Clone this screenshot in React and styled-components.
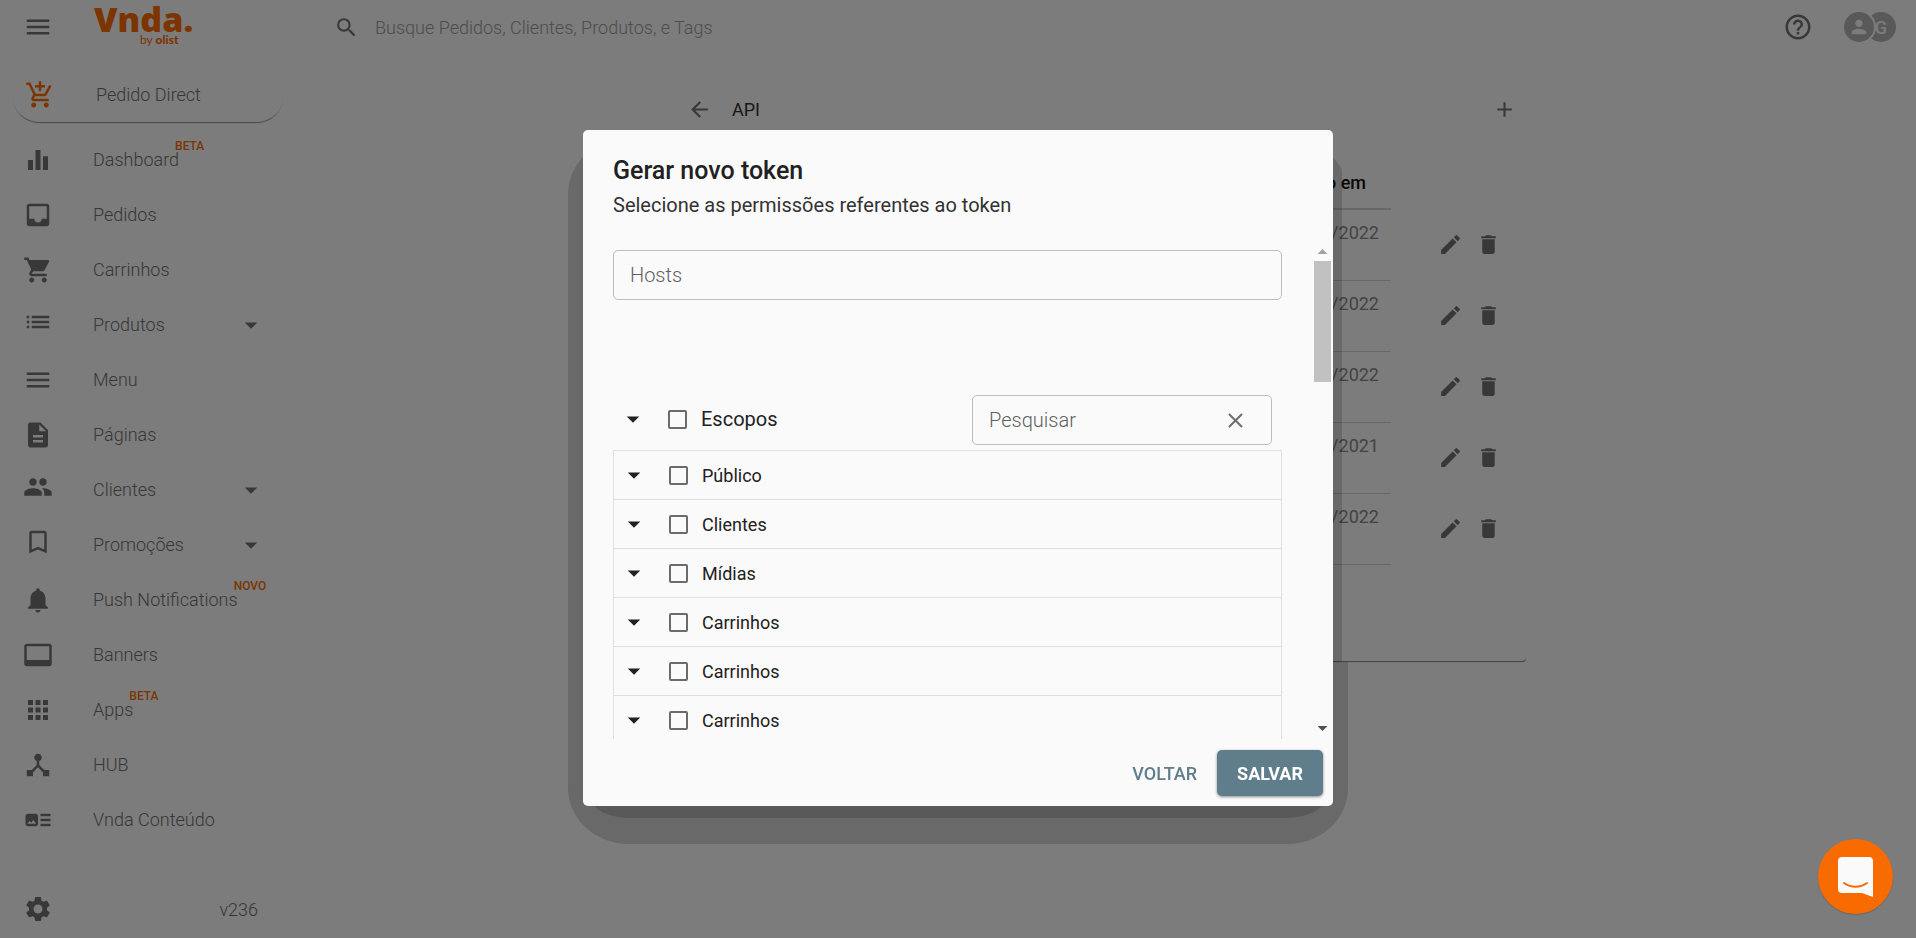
import React, { useState } from "react";
import styled, { createGlobalStyle } from "styled-components";
import {
	MdAdd,
	MdAddShoppingCart,
	MdApps,
	MdArrowBack,
	MdArrowDropDown,
	MdArtTrack,
	MdBookmarkBorder,
	MdClose,
	MdDelete,
	MdDescription,
	MdDeviceHub,
	MdEdit,
	MdEqualizer,
	MdHelpOutline,
	MdInbox,
	MdList,
	MdMenu,
	MdNotifications,
	MdPeople,
	MdPerson,
	MdSearch,
	MdSettings,
	MdShoppingCart,
	MdVideoLabel
} from "react-icons/md";

const GlobalStyle = createGlobalStyle`
	* {
		box-sizing: border-box;
	}

	body {
		margin: 0;
		background: #f8f8f8;
		color: #6f6f6f;
		font-family: Roboto, "Liberation Sans", sans-serif;
		font-size: 18px;
		font-weight: 300;
	}

	button, input {
		font-family: inherit;
	}

	a {
		color: inherit;
		text-decoration: none;
	}
`;

const Page = styled.div`
	display: flex;
	flex-direction: column;
	min-height: 100vh;
`;

const TopBar = styled.header`
	display: flex;
	align-items: center;
	height: 54px;
	padding: 0 20px 0 23px;
`;

const IconButton = styled.button`
	display: flex;
	align-items: center;
	justify-content: center;
	padding: 0;
	border: none;
	background: none;
	color: ${props => props.$color || "#707070"};
	font-size: ${props => props.$size || 25}px;
	cursor: pointer;
`;

const Logo = styled.a`
	display: flex;
	flex-direction: column;
	width: 240px;
	margin-left: 41px;
	color: #f86b00;

	strong {
		font-family: "Open Sans", sans-serif;
		font-size: 34px;
		font-weight: 800;
		line-height: 26px;
	}

	span {
		padding-left: 46px;
		font-family: Lato, sans-serif;
		font-size: 12px;
		font-weight: 400;
		line-height: 16px;
	}

	b {
		font-weight: 900;
	}
`;

const Search = styled.label`
	display: flex;
	flex: 1;
	align-items: center;
	gap: 16px;
	color: #707070;
	font-size: 25px;

	input {
		flex: 1;
		padding: 0;
		border: none;
		outline: none;
		background: none;
		font-size: 18px;
		font-weight: 300;
	}

	input::placeholder {
		color: #9a9a9a;
	}
`;

const Avatars = styled.div`
	display: flex;
	align-items: center;
	margin-left: 29px;
`;

const Avatar = styled.span`
	display: flex;
	align-items: center;
	justify-content: center;
	width: ${props => (props.$front ? 34 : 30)}px;
	height: ${props => (props.$front ? 34 : 30)}px;
	margin-left: ${props => (props.$front ? 0 : -10)}px;
	border: ${props => (props.$front ? "2px solid #f8f8f8" : "none")};
	border-radius: 50%;
	background: #b2b2b2;
	color: #f8f8f8;
	font-size: ${props => (props.$front ? 22 : 18)}px;
	font-weight: 500;
	position: relative;
	z-index: ${props => (props.$front ? 1 : 0)};
`;

const Body = styled.div`
	display: flex;
	flex: 1;
`;

const Sidebar = styled.nav`
	display: flex;
	flex-direction: column;
	width: 283px;
	padding-top: 13px;
`;

const DirectLink = styled.a`
	display: flex;
	align-items: center;
	gap: 41px;
	height: 55px;
	margin: 0 -1px 10px 12px;
	padding-left: 13px;
	border-radius: 28px;
	box-shadow: 0 2px 1px -1px #909090;

	svg {
		color: #f86b00;
		font-size: 30px;
	}
`;

const NavItem = styled.a`
	display: flex;
	align-items: center;
	height: 55px;
	padding: 0 17px 0 23px;

	svg {
		color: #707070;
		font-size: 30px;
	}

	svg:first-child {
		margin-bottom: ${props => (props.$expandable ? 5 : 0)}px;
	}
`;

const NavLabel = styled.span`
	position: relative;
	margin: 0 auto 0 40px;
`;

const Badge = styled.sup`
	position: absolute;
	top: -10px;
	left: calc(100% - 4px);
	color: #f86b00;
	font-size: 12px;
	font-weight: 500;
	line-height: 14px;
`;

const SidebarFooter = styled.div`
	display: flex;
	align-items: center;
	justify-content: space-between;
	height: 58px;
	margin-top: auto;
	padding: 0 25px 0 23px;
`;

const Main = styled.main`
	flex: 1;
	padding-top: 30px;
`;

const Container = styled.div`
	max-width: 855px;
	margin: 0 auto;
`;

const ContentHeader = styled.div`
	display: flex;
	align-items: center;
	gap: 20px;
	height: 50px;
	padding: 0 10px 0 15px;

	h1 {
		flex: 1;
		margin: 0;
		color: #303030;
		font-size: 18px;
		font-weight: 400;
	}
`;

const Card = styled.section`
	display: flex;
	align-items: flex-start;
	padding: 20px 26px 96px 28px;
	border-radius: 5px;
	box-shadow: 0 2px 1px -1px #808080;
`;

const TokenTable = styled.table`
	flex: 1;
	border-collapse: collapse;

	th {
		height: 55px;
		padding: 2px 25px 0 0;
		border-bottom: 2px solid #d0d0d0;
		color: #101010;
		font-size: 18px;
		font-weight: 500;
		text-align: right;
	}

	td {
		height: 71px;
		padding: 12px 12px 0 0;
		border-bottom: 1px solid #d0d0d0;
		color: #868686;
		font-weight: 400;
		text-align: right;
		vertical-align: top;
	}
`;

const RowActions = styled.div`
	display: flex;
	flex-direction: column;
	padding: 55px 0 0 47px;
`;

const ActionPair = styled.div`
	display: flex;
	align-items: center;
	gap: 13px;
	height: 71px;
`;

const Backdrop = styled.div`
	position: fixed;
	inset: 0;
	z-index: 2;
	display: flex;
	align-items: center;
	justify-content: center;
	padding-bottom: 2px;
	background: rgba(0, 0, 0, 0.5);
`;

const DialogShade = styled.div`
	position: relative;
	display: flex;
	width: 750px;
	max-width: 90vw;
	height: calc(100vh - 262px);

	&::before {
		content: "";
		position: absolute;
		inset: 8px -15px -38px;
		border-radius: 60px / 56px;
		background: rgba(0, 0, 0, 0.15);
		clip-path: polygon(
			0 0,
			calc(100% - 6px) 0,
			calc(100% - 6px) calc(100% - 182px),
			100% calc(100% - 182px),
			100% 100%,
			0 100%
		);
	}

	&::after {
		content: "";
		position: absolute;
		inset: auto 8px -12px;
		height: 40px;
		border-radius: 0 0 40px 40px / 0 0 20px 20px;
		background: rgba(0, 0, 0, 0.16);
	}
`;

const Dialog = styled.form`
	position: relative;
	z-index: 1;
	display: flex;
	flex: 1;
	flex-direction: column;
	border-radius: 5px;
	background: #fafafa;
	color: #212121;
`;

const DialogHeader = styled.div`
	padding: 25px 30px 22px;

	h2 {
		margin: 0;
		font-size: 25px;
		font-weight: 500;
		line-height: 32px;
	}

	p {
		margin: 0;
		color: #333;
		font-size: 20px;
		font-weight: 400;
		line-height: 36px;
	}
`;

const DialogBody = styled.div`
	display: flex;
	flex: 1;
	min-height: 0;
	padding-right: 2px;
`;

const DialogContent = styled.div`
	flex: 1;
	overflow-y: auto;
	scrollbar-width: none;
	padding: 0 32px 0 30px;
`;

const Scrollbar = styled.div`
	display: flex;
	flex-direction: column;
	align-items: center;
	width: 17px;
`;

const ScrollArrow = styled.span`
	width: 10px;
	height: 5px;
	margin: ${props => (props.$down ? "auto 0 8px" : "4px 0 7px")};
	background: ${props => (props.$down ? "#505050" : "#a3a3a3")};
	clip-path: ${props =>
		props.$down
			? "polygon(0 0, 100% 0, 50% 100%)"
			: "polygon(50% 0, 100% 100%, 0 100%)"};
`;

const ScrollThumb = styled.span`
	width: 17px;
	height: 121px;
	background: #c1c1c1;
`;

const Field = styled.div`
	display: flex;
	align-items: center;
	height: 50px;
	padding: 0 ${props => (props.$search ? 23 : 16)}px 0 16px;
	margin: ${props => (props.$search ? "2px 10px 0 auto" : "5px 0 0")};
	width: ${props => (props.$search ? "300px" : "100%")};
	border: 1px solid #bdbdbd;
	border-radius: 5px;

	input {
		flex: 1;
		min-width: 0;
		padding: 0;
		border: none;
		outline: none;
		background: none;
		font-size: 20px;
		font-weight: 300;
	}

	input::placeholder {
		color: #606060;
	}
`;

const ScopeHeader = styled.div`
	display: flex;
	align-items: center;
	height: 62px;
	margin-top: 88px;
	padding-left: 5px;
	font-size: 20px;
	font-weight: 400;
`;

const ScopeList = styled.ul`
	margin: 0;
	padding: 0;
	border: 1px solid #e0e0e0;
	list-style: none;
`;

const ScopeRow = styled.li`
	display: flex;
	align-items: center;
	height: 49px;
	padding-left: 5px;
	border-bottom: 1px solid #e0e0e0;
	font-weight: 400;
`;

const CheckLabel = styled.label`
	display: flex;
	align-items: center;
	gap: 14px;
	margin-left: 20px;
`;

const Checkbox = styled.input`
	appearance: none;
	width: 19px;
	height: 19px;
	margin: 0;
	border: 2px solid #6b6b6b;
	border-radius: 2px;

	&:checked {
		background: #607d8b;
	}
`;

const DialogFooter = styled.div`
	display: flex;
	justify-content: flex-end;
	padding: 11px 10px 10px;
`;

const FooterButton = styled.button`
	height: 46px;
	padding: 0 20px;
	border: none;
	border-radius: 5px;
	background: ${props => (props.$primary ? "#607d8b" : "none")};
	box-shadow: ${props =>
		props.$primary ? "0 1px 3px rgba(0, 0, 0, 0.45)" : "none"};
	color: ${props => (props.$primary ? "#fff" : "#607d8b")};
	font-size: 18px;
	font-weight: ${props => (props.$primary ? 700 : 500)};
	cursor: pointer;
`;

const Launcher = styled.button`
	position: fixed;
	right: 23px;
	bottom: 24px;
	z-index: 3;
	width: 75px;
	height: 75px;
	padding: 0;
	border: none;
	border-radius: 50%;
	background: #f86b00;
	box-shadow: 0 1px 1px #686868;
	cursor: pointer;

	svg {
		display: block;
	}
`;

const navItems = [
	{ label: "Dashboard", icon: MdEqualizer, badge: "BETA" },
	{ label: "Pedidos", icon: MdInbox },
	{ label: "Carrinhos", icon: MdShoppingCart },
	{ label: "Produtos", icon: MdList, expandable: true },
	{ label: "Menu", icon: MdMenu },
	{ label: "Páginas", icon: MdDescription },
	{ label: "Clientes", icon: MdPeople, expandable: true },
	{ label: "Promoções", icon: MdBookmarkBorder, expandable: true },
	{ label: "Push Notifications", icon: MdNotifications, badge: "NOVO" },
	{ label: "Banners", icon: MdVideoLabel },
	{ label: "Apps", icon: MdApps, badge: "BETA" },
	{ label: "HUB", icon: MdDeviceHub },
	{ label: "Vnda Conteúdo", icon: MdArtTrack }
];

const tokens = [
	{ id: 1, date: "10/05/2022" },
	{ id: 2, date: "10/05/2022" },
	{ id: 3, date: "10/05/2022" },
	{ id: 4, date: "10/05/2021" },
	{ id: 5, date: "10/05/2022" }
];

const scopes = [
	"Público",
	"Clientes",
	"Mídias",
	"Carrinhos",
	"Carrinhos",
	"Carrinhos"
];

const TokenDialog = () => {
	const [query, setQuery] = useState("");

	return (
		<DialogShade>
			<Dialog
				role="dialog"
				aria-labelledby="dialog-title"
				onSubmit={e => e.preventDefault()}
			>
				<DialogHeader>
					<h2 id="dialog-title">Gerar novo token</h2>
					<p>Selecione as permissões referentes ao token</p>
				</DialogHeader>

				<DialogBody>
					<DialogContent>
						<Field>
							<input type="text" placeholder="Hosts" aria-label="Hosts" />
						</Field>
						<ScopeHeader>
							<IconButton type="button" $size={30} $color="#212121" aria-label="Expandir escopos">
								<MdArrowDropDown />
							</IconButton>
							<CheckLabel>
								<Checkbox type="checkbox" />
								Escopos
							</CheckLabel>
							<Field $search>
								<input
									type="text"
									placeholder="Pesquisar"
									aria-label="Pesquisar"
									value={query}
									onChange={e => setQuery(e.target.value)}
								/>
								<IconButton type="button" aria-label="Limpar" onClick={() => setQuery("")}>
									<MdClose />
								</IconButton>
							</Field>
						</ScopeHeader>
						<ScopeList>
							{scopes.map((scope, i) => (
								<ScopeRow key={i}>
									<IconButton type="button" $size={30} $color="#212121" aria-label={`Expandir ${scope}`}>
										<MdArrowDropDown />
									</IconButton>
									<CheckLabel>
										<Checkbox type="checkbox" />
										{scope}
									</CheckLabel>
								</ScopeRow>
							))}
						</ScopeList>
					</DialogContent>
					<Scrollbar aria-hidden="true">
						<ScrollArrow />
						<ScrollThumb />
						<ScrollArrow $down />
					</Scrollbar>
				</DialogBody>

				<DialogFooter>
					<FooterButton type="button">VOLTAR</FooterButton>
					<FooterButton type="submit" $primary>
						SALVAR
					</FooterButton>
				</DialogFooter>
			</Dialog>
		</DialogShade>
	);
};

const App = () => (
	<>
		<GlobalStyle />
		<Page>
			<TopBar>
				<IconButton $size={30} aria-label="Abrir menu">
					<MdMenu />
				</IconButton>
				<Logo href="#">
					<strong>Vnda.</strong>
					<span>
						by <b>olist</b>
					</span>
				</Logo>
				<Search>
					<MdSearch />
					<input
						type="text"
						aria-label="Busca"
						placeholder="Busque Pedidos, Clientes, Produtos, e Tags"
					/>
				</Search>
				<IconButton $size={30} aria-label="Ajuda">
					<MdHelpOutline />
				</IconButton>
				<Avatars>
					<Avatar $front>
						<MdPerson />
					</Avatar>
					<Avatar>G</Avatar>
				</Avatars>
			</TopBar>

			<Body>
				<Sidebar>
					<DirectLink href="#">
						<MdAddShoppingCart />
						Pedido Direct
					</DirectLink>
					{navItems.map(({ label, icon: Icon, badge, expandable }) => (
						<NavItem key={label} href="#" $expandable={expandable}>
							<Icon />
							<NavLabel>
								{label}
								{badge && <Badge>{badge}</Badge>}
							</NavLabel>
							{expandable && <MdArrowDropDown />}
						</NavItem>
					))}
					<SidebarFooter>
						<IconButton $size={30} aria-label="Configurações">
							<MdSettings />
						</IconButton>
						<span>v236</span>
					</SidebarFooter>
				</Sidebar>

				<Main>
					<Container>
						<ContentHeader>
							<IconButton aria-label="Voltar">
								<MdArrowBack />
							</IconButton>
							<h1>API</h1>
							<IconButton aria-label="Adicionar">
								<MdAdd />
							</IconButton>
						</ContentHeader>
						<Card>
							<TokenTable>
								<thead>
									<tr>
										<th>Criado em</th>
									</tr>
								</thead>
								<tbody>
									{tokens.map(token => (
										<tr key={token.id}>
											<td>{token.date}</td>
										</tr>
									))}
								</tbody>
							</TokenTable>
							<RowActions>
								{tokens.map(token => (
									<ActionPair key={token.id}>
										<IconButton aria-label="Editar">
											<MdEdit />
										</IconButton>
										<IconButton aria-label="Excluir">
											<MdDelete />
										</IconButton>
									</ActionPair>
								))}
							</RowActions>
						</Card>
					</Container>
				</Main>
			</Body>
		</Page>

		<Backdrop>
			<TokenDialog />
		</Backdrop>

		<Launcher aria-label="Abrir chat">
			<svg width="75" height="75" viewBox="0 0 75 75" fill="none">
				<path
					d="M24 18h27a4 4 0 0 1 4 4v36l-11-4H24a4 4 0 0 1-4-4V22a4 4 0 0 1 4-4z"
					fill="#fafafa"
				/>
				<path
					d="M26 44c7 5 16 5 23 0"
					stroke="#f86b00"
					strokeWidth="2"
					strokeLinecap="round"
				/>
			</svg>
		</Launcher>
	</>
);

export default App;
